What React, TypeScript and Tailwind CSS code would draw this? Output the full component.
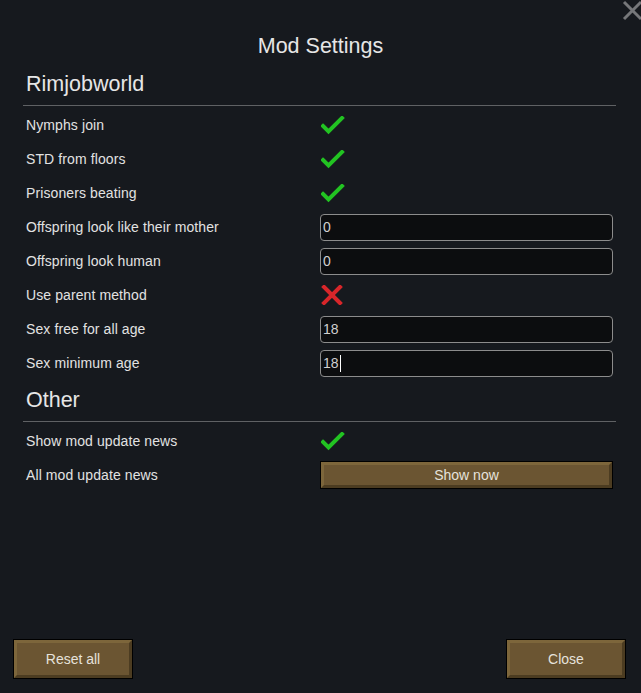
const font = { fontFamily: '"Liberation Sans", Arial, sans-serif' }

function Check() {
    return (
        <svg width="24" height="20" viewBox="0 0 24 20" className="ml-[1px] mt-[2px]">
            <path d="M2 10 L7.5 15.5 L21 2" fill="none" stroke="#22c322" strokeWidth="4" strokeLinecap="square" />
        </svg>
    )
}

function Cross() {
    return (
        <svg width="22" height="20" viewBox="0 0 22 20" className="ml-[1px]">
            <path d="M3 2 L19 18 M19 2 L3 18" fill="none" stroke="#d8262a" strokeWidth="4" strokeLinecap="square" />
        </svg>
    )
}

function GameButton({ label, className }: { label: string; className?: string }) {
    return (
        <div className={`border border-black ${className ?? ''}`}>
            <div className="h-full w-full border-t-[3px] border-l-[3px] border-r-[3px] border-b-[3px] border-t-[#7d663b] border-l-[#7d663b] border-r-[#4c3c21] border-b-[#4c3c21] bg-[#6b5532] flex items-center justify-center text-[14px] text-[#e6e2dc]">
                {label}
            </div>
        </div>
    )
}

function Row({ label, children }: { label: string; children: React.ReactNode }) {
    return (
        <div className="flex h-[34px] items-center">
            <div className="w-[297px] pl-[3px] text-[14px] tracking-[0.1px] text-[#e2e2e2]">{label}</div>
            <div className="flex-1 pr-[3px]">{children}</div>
        </div>
    )
}

function NumField({ value, caret }: { value: string; caret?: boolean }) {
    return (
        <div className="flex h-[27px] items-center rounded-[4px] border border-[#8c8c8c] bg-[#0c0d0f] pl-[2px] text-[14px] text-[#d0d0d0]">
            {value}
            {caret && <span className="ml-[1px] inline-block h-[17px] w-[1px] bg-white" />}
        </div>
    )
}

function Heading({ title, top }: { title: string; top: string }) {
    return (
        <div className={`${top} border-b border-[#5f6164] pb-[9px] pl-[3px] text-[21.5px] leading-[24px] text-[#e6e6e6]`}>
            {title}
        </div>
    )
}

export default function App() {
    return (
        <div className="relative flex h-[693px] w-[641px] flex-col bg-[#16191e]" style={font}>
            {/* close */}
            <svg width="22" height="22" viewBox="0 0 22 22" className="absolute right-[-2px] top-0">
                <path d="M3 2 L20 19 M20 2 L3 19" stroke="#76777a" strokeWidth="3" />
            </svg>

            <div className="pt-[34px] text-center text-[21.5px] leading-[24px] text-[#e6e6e6]">Mod Settings</div>

            <div className="flex flex-1 flex-col pl-[23px] pr-[25px]">
                <Heading title="Rimjobworld" top="pt-[14px]" />
                <div className="mt-[2px]">
                    <Row label="Nymphs join"><Check /></Row>
                    <Row label="STD from floors"><Check /></Row>
                    <Row label="Prisoners beating"><Check /></Row>
                    <Row label="Offspring look like their mother"><NumField value="0" /></Row>
                    <Row label="Offspring look human"><NumField value="0" /></Row>
                    <Row label="Use parent method"><Cross /></Row>
                    <Row label="Sex free for all age"><NumField value="18" /></Row>
                    <Row label="Sex minimum age"><NumField value="18" caret /></Row>
                </div>

                <Heading title="Other" top="pt-[8px]" />
                <div className="mt-[2px]">
                    <Row label="Show mod update news"><Check /></Row>
                    <Row label="All mod update news">
                        <GameButton label="Show now" className="h-[28px]" />
                    </Row>
                </div>
            </div>

            <div className="flex justify-between pb-[14px] pl-[13px] pr-[15px]">
                <GameButton label="Reset all" className="h-[40px] w-[120px]" />
                <GameButton label="Close" className="h-[40px] w-[120px]" />
            </div>
        </div>
    )
}
